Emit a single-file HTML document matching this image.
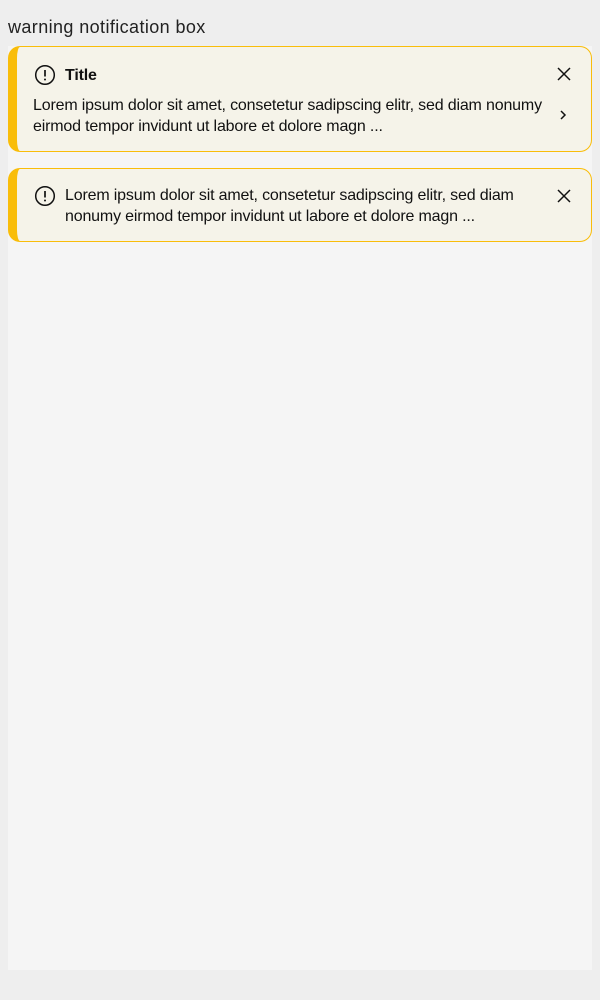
<!DOCTYPE html>
<html><head><style>
body{margin:0;width:600px;height:1000px;background:#eeeeee;font-family:"Liberation Sans",Arial,sans-serif;position:relative;overflow:hidden}
.h{position:absolute;left:8px;top:17px;font-size:18px;letter-spacing:0.4px;color:#222}
.panel{position:absolute;left:8px;top:46px;width:584px;height:924px;background:#f5f5f5}
.card{position:absolute;left:8px;width:584px;background:#f5f3e9;border:1px solid #f9bd0a;border-left:9px solid #f9bd0a;border-radius:12px;box-sizing:border-box}
.t{position:absolute;font-size:16px;line-height:21px;color:#111;letter-spacing:-0.17px}
svg{position:absolute}
</style></head><body>
<div class="h">warning notification box</div>
<div class="panel"></div>
<div class="card" style="top:46px;height:106px"></div>
<div class="card" style="top:168px;height:74px"></div>
<svg style="left:34px;top:64px" width="22" height="22" viewBox="0 0 22 22"><circle cx="11" cy="11" r="9.3" fill="none" stroke="#111" stroke-width="1.5"/><path d="M11 6v6.5" stroke="#111" stroke-width="1.7"/><circle cx="11" cy="15.5" r="1" fill="#111"/></svg>
<div class="t" style="left:65px;top:65px;font-weight:bold">Title</div>
<div class="t" style="left:33px;top:95px;width:525px">Lorem ipsum dolor sit amet, consetetur sadipscing elitr, sed diam nonumy eirmod tempor invidunt ut labore et dolore magn ...</div>
<svg style="left:556px;top:66px" width="16" height="16" viewBox="0 0 16 16"><path d="M2 2L14 14M14 2L2 14" stroke="#111" stroke-width="1.5"/></svg>
<svg style="left:558px;top:109px" width="10" height="12" viewBox="0 0 10 12"><path d="M3 2l4 4-4 4" fill="none" stroke="#111" stroke-width="1.5"/></svg>
<svg style="left:34px;top:185px" width="22" height="22" viewBox="0 0 22 22"><circle cx="11" cy="11" r="9.3" fill="none" stroke="#111" stroke-width="1.5"/><path d="M11 6v6.5" stroke="#111" stroke-width="1.7"/><circle cx="11" cy="15.5" r="1" fill="#111"/></svg>
<div class="t" style="left:65px;top:185px;width:460px">Lorem ipsum dolor sit amet, consetetur sadipscing elitr, sed diam nonumy eirmod tempor invidunt ut labore et dolore magn ...</div>
<svg style="left:556px;top:188px" width="16" height="16" viewBox="0 0 16 16"><path d="M2 2L14 14M14 2L2 14" stroke="#111" stroke-width="1.5"/></svg>
</body></html>
